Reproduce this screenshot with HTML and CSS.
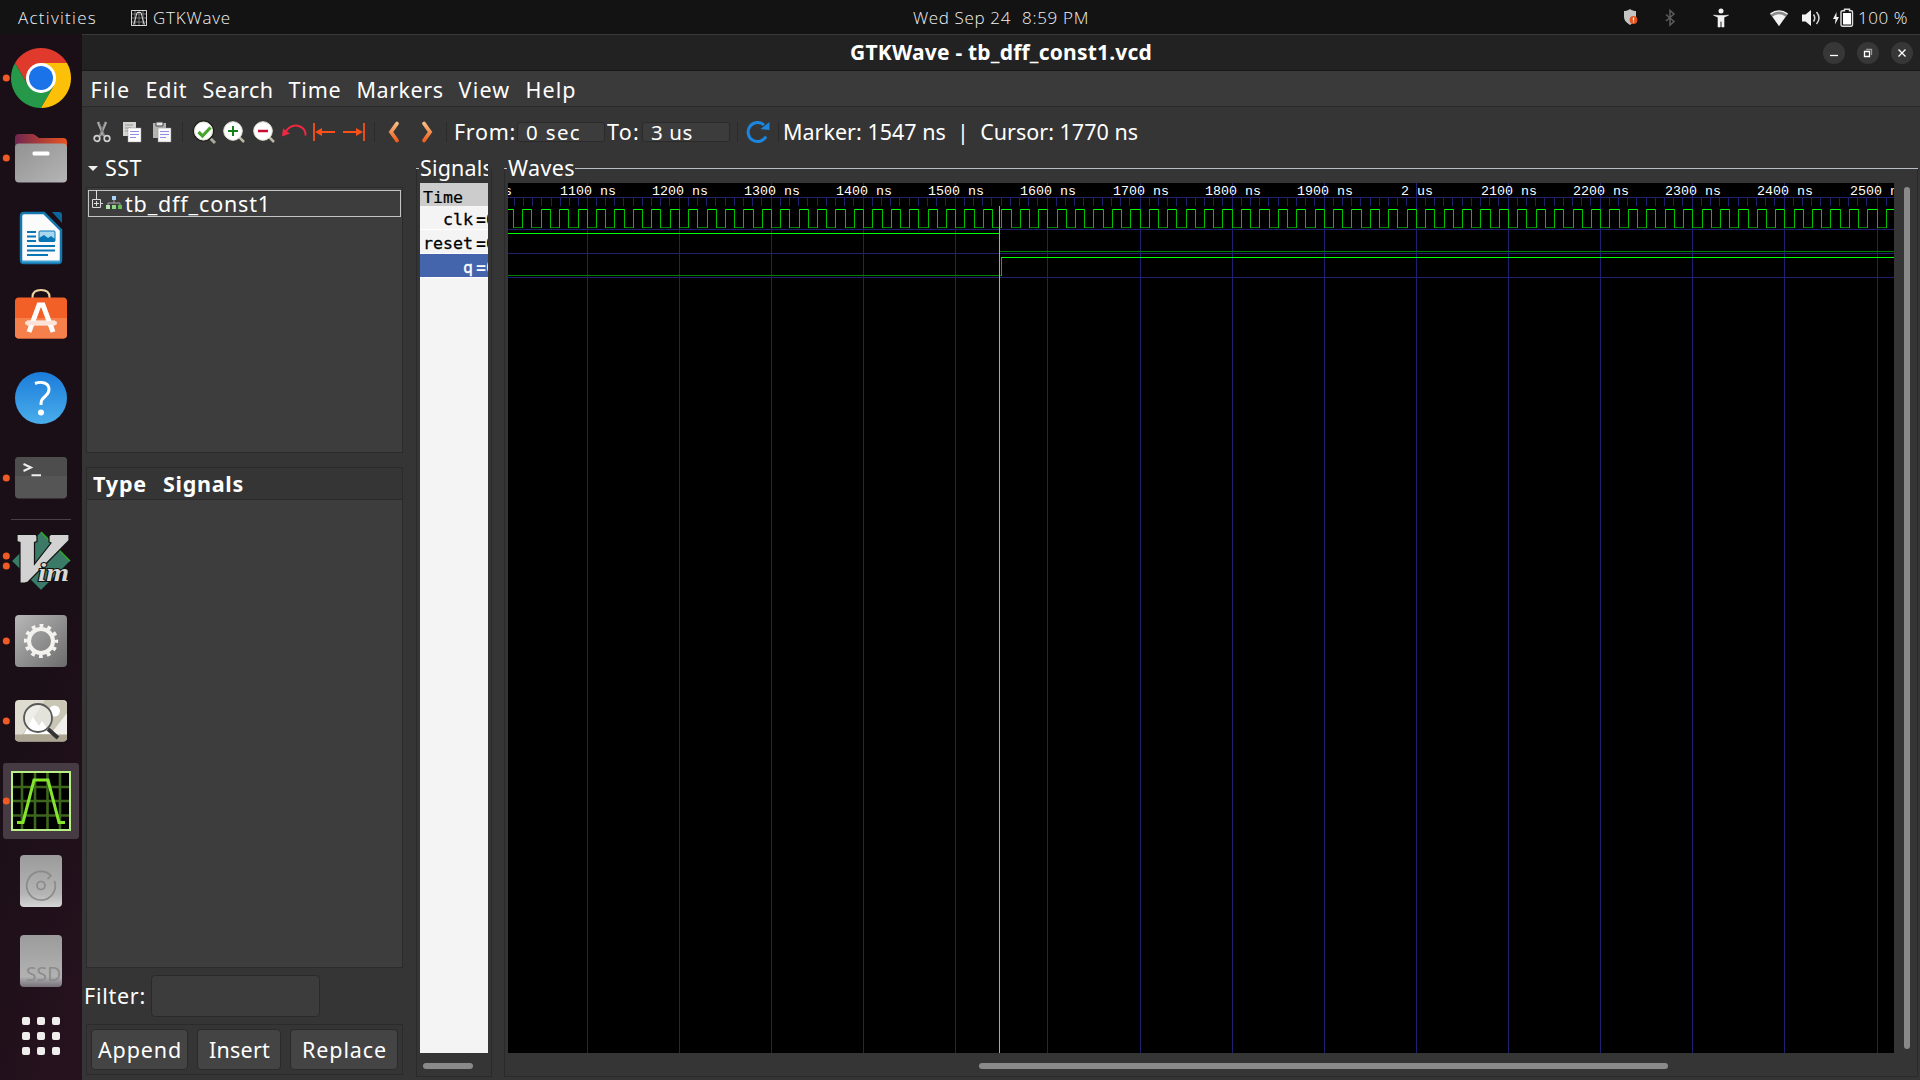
FILE: index.html
```html
<!DOCTYPE html>
<html lang="en">
<head>
<meta charset="utf-8">
<title>GTKWave - tb_dff_const1.vcd</title>
<link rel="stylesheet" href="styles.css">
</head>
<body>
<header class="topbar">
  <span class="fit activities" data-w="79">Activities</span>
  <svg class="app-icon" width="16" height="16" viewBox="0 0 16 16"><path d="M.5.5h15v15H.5zM4 1v14M8 1v14M12 1v14M1 4h14M1 8h14M1 12h14" fill="none" stroke="#777"/><path d="M.5.5h15v15H.5zM2 14h1L6 2.500h4L13 14h1" fill="none" stroke="#d8d8d8"/></svg>
  <span class="fit" data-w="78">GTKWave</span>
  <span class="clock"><span class="fit" data-w="98">Wed Sep 24</span><span class="fit" data-w="67">8:59 PM</span></span>
  <span class="tray">
    <svg class="ti" viewBox="0 0 24 24"><path d="M12 3c-2 1.500-4 2-6 2v6c0 3 2 5.500 6 8 4-2.500 6-5 6-8V5c-2 0-4-.5-6-2z" fill="#c4c4c4"/><circle cx="15.500" cy="14" r="3.900" fill="#e2541f"/><path d="M15.500 11.500v3M15.500 15.500v1" stroke="#fff" stroke-width="1.200"/></svg>
    <svg class="ti bt" viewBox="0 0 24 24"><path d="M8 8.500l8 7-4 3.500V4.500l4 3.500-8 7" fill="none" stroke="#5c5c5c" stroke-width="1.500"/></svg>
    <svg class="ti acc" viewBox="0 0 24 24"><circle cx="12" cy="5" r="2.500" fill="#f2f2f2"/><path d="M4.500 9.200l5 .3h5l5-.3-4.500 2V21h-2.200v-5.500h-1.600V21H9V11.200z" fill="#f2f2f2" stroke="#f2f2f2" stroke-width=".6"/></svg>
    <svg class="ti wifi" viewBox="0 0 24 24"><path d="M3 8Q12 1.500 21 8L12 20z" fill="#8a8a8a"/><path d="M3.500 7.800Q12 2 20.500 7.800" fill="none" stroke="#f2f2f2" stroke-width="1.400"/><path d="M5.500 10.500Q12 6 18.500 10.500L12 20z" fill="#f2f2f2"/></svg>
    <svg class="ti vol" viewBox="0 0 24 24"><path d="M3 8.500h3.500L12 4v16l-5.500-4.500H3z" fill="#f2f2f2"/><path d="M14.500 8.500Q17 12 14.500 15.500M17.500 6Q22.500 12 17.500 18" fill="none" stroke="#d5d5d5" stroke-width="1.500"/></svg>
    <svg class="ti bat" viewBox="0 0 24 24"><path d="M5.500 6L2 13h2.500L4 18.500 8 11H5.500z" fill="#f2f2f2"/><path d="M11.500 4.800h2v-1.500h5v1.500h1.700q1.300 0 1.300 1.300v12.700q0 1.400-1.300 1.400h-8.900q-1.300 0-1.300-1.400V6.100q0-1.300 1.500-1.300z" fill="none" stroke="#dedede" stroke-width="1.400"/><rect x="12" y="7" width="8" height="11.500" fill="#fff"/></svg>
    <span class="fit" data-w="50">100 %</span>
  </span>
</header>
<div class="desktop">
  <nav class="dock">
    <svg class="dk" viewBox="0 0 82 80"><circle class="dot" cx="6.300" cy="40" r="3.500"/><path d="M15 25A30 30 0 0 1 67 25H41L28 47.500z" fill="#e03a2d"/><path d="M15 25A30 30 0 0 0 41 70L54 47.500 41 40 28 47.500z" fill="#26984a"/><path d="M41 70A30 30 0 0 0 67 25H41l-3 15 16 7.500z" fill="#fdc008"/><circle cx="41" cy="40" r="15" fill="#fff"/><circle cx="41" cy="40" r="12" fill="#1a73e8"/></svg>
    <svg class="dk" viewBox="0 0 82 80"><defs><linearGradient id="fo"><stop offset="0" stop-color="#70264f"/><stop offset="1" stop-color="#e95420"/></linearGradient><linearGradient id="fg" x2="1" y2="1"><stop stop-color="#929292"/><stop offset="1" stop-color="#b5b5b5"/></linearGradient></defs><circle class="dot" cx="6.300" cy="40" r="3.500"/><path d="M15 30V20q0-4 4-4h13q2 0 3 1l4 3h24q4 0 4 4v8z" fill="url(#fo)"/><rect x="15" y="25.500" width="52" height="39" rx="4" fill="url(#fg)"/><rect x="32.500" y="33.500" width="17" height="4" rx="1.500" fill="#fff"/></svg>
    <svg class="dk" viewBox="0 0 82 80"><path d="M24 15h20l17 17v30q0 3-3 3H24q-3 0-3-3V18q0-3 3-3z" fill="#fbfbfb" stroke="#1478ae" stroke-width="2.500"/><path d="M22 63.500h38" stroke="#40a3d5" stroke-width="2"/><path d="M52 14h7q3 0 3 3v8z" fill="#0d679f"/><g stroke="#0875b5" stroke-width="2"><path d="M27 34h9M27 38.500h9M27 43h9M27 48h28M27 52.500h28M27 57h21"/></g><rect x="39" y="33" width="16" height="10.500" rx="1" fill="#a8d8ef" stroke="#0875b5"/><path d="M39 43v-3l5-3 4 3 3-2 4 3v2z" fill="#0875b5"/></svg>
    <svg class="dk" viewBox="0 0 82 80"><path d="M32.500 22v-3q0-7 8.500-7t8.500 7v3" fill="none" stroke="#eed4a2" stroke-width="2"/><rect x="15" y="19.500" width="52" height="41" rx="4" fill="#f26027"/><path d="M15 40h52v16.500q0 4-4 4H19q-4 0-4-4z" fill="#f5804c"/><path d="M29 54l10-27h4l10 27M27 45h28" fill="none" stroke="#fff" stroke-width="5"/><path d="M27 45h28" stroke="#ffe3d8" stroke-width="4" stroke-linecap="round"/></svg>
    <svg class="dk" viewBox="0 0 82 80"><defs><linearGradient id="hb" x2="0" y2="1"><stop stop-color="#1b7cda"/><stop offset="1" stop-color="#4aaeeb"/></linearGradient></defs><circle cx="41" cy="40" r="26" fill="url(#hb)"/><path d="M35 25.500Q39 24 42 24.500c9 1 8.500 9.500 3 14-4 3.500-4 5-4 8.500" fill="none" stroke="#fff" stroke-width="3"/><circle cx="41" cy="54.500" r="3" fill="#fff"/></svg>
    <svg class="dk" viewBox="0 0 82 80"><circle class="dot" cx="6.300" cy="40" r="3.500"/><rect x="15" y="19" width="52" height="41.500" rx="4" fill="#555"/><path d="M15 38V23q0-4 4-4h44q4 0 4 4v15z" fill="#4d4d4d"/><path d="M23.500 26l7.500 3.500-7.500 3.500M31.500 37.200h9.500" fill="none" stroke="#eee" stroke-width="2"/></svg>
    <div class="dock-rule"></div>
    <svg class="dk" viewBox="0 0 82 80"><circle class="dot" cx="6.300" cy="35" r="3.500"/><circle class="dot" cx="6.300" cy="45" r="3.500"/><path d="M41 11l29 29-29 29-29-29z" fill="#3b7a66" stroke="#173f31"/><path d="M41 11l29 29" stroke="#2fae20" stroke-width="1.500"/><path d="M17 13.500h19l1 2v5l-2.500 1V43L51 22l-2-1v-6l1.500-1.500H69v6L28 61l-3 1h-5V21.500l-3-1z" fill="#d2d2d2" stroke="#111" stroke-width="1.200"/><text x="38" y="60" textLength="31" lengthAdjust="spacingAndGlyphs" font-family="Liberation Serif,serif" font-weight="bold" font-style="italic" font-size="25" fill="#d8d8d8" stroke="#111" stroke-width="2" paint-order="stroke">im</text></svg>
    <svg class="dk" viewBox="0 0 82 80"><defs><linearGradient id="sg" x2="1" y2="1"><stop stop-color="#b8b8b8"/><stop offset="1" stop-color="#6b6b6b"/></linearGradient></defs><circle class="dot" cx="6.300" cy="40" r="3.500"/><rect x="15" y="14" width="52" height="52" rx="4" fill="url(#sg)"/><circle cx="41" cy="40" r="12" fill="none" stroke="#f4f2ef" stroke-width="4"/><circle cx="41" cy="40" r="15.300" fill="none" stroke="#f4f2ef" stroke-width="3.600" stroke-dasharray="3.800 4.210"  stroke-dashoffset="1.900"/></svg>
    <svg class="dk" viewBox="0 0 82 80"><circle class="dot" cx="6.300" cy="40" r="3.500"/><rect x="15" y="19" width="52" height="41.500" rx="4" fill="#dedbd0"/><path d="M45 19h18l4 4v31H22z" fill="#c9c6b6"/><path d="M50 54l17-22v22z" fill="#f0efea"/><path d="M15 53.500h52v3q0 4-4 4H19q-4 0-4-4z" fill="#aba591"/><circle cx="54.500" cy="30" r="5.500" fill="#fff"/><path d="M24 53l9-17 6 9 3-5 9 13z" fill="#fff"/><circle cx="38" cy="37" r="14" fill="#ffffff80" stroke="#585858" stroke-width="1.800"/><path d="M48 48l10 9" stroke="#333" stroke-width="4"/></svg>
    <svg class="dk" viewBox="0 0 82 80"><rect x="3" y="2" width="76" height="76" rx="3" fill="#463b42"/><circle class="dot" cx="6.300" cy="40" r="3.500"/><rect x="12" y="11" width="58" height="58" fill="#000" stroke="#b9ef85" stroke-width="2"/><path d="M22 12v56M35 12v56M47.500 12v56M60 12v56M13 26h56M13 40h56M13 54.500h56" stroke="#3c661b" stroke-width="2.600"/><path d="M17 61.500h6L34 19h14l11 42.500h6" fill="none" stroke="#85e52d" stroke-width="3"/></svg>
    <svg class="dk" viewBox="0 0 82 80"><defs><linearGradient id="dg" x2="0" y2="1"><stop stop-color="#9b9b9b"/><stop offset=".75" stop-color="#b4b4b4"/><stop offset="1" stop-color="#d6d6d6"/></linearGradient></defs><rect x="20" y="14" width="42" height="52" rx="4" fill="url(#dg)"/><g fill="none" stroke="#8a8a8a" stroke-width="1.700"><path d="M54.500 40A14.300 14.300 0 1 1 51 34.500l-3.500 3.500"/><circle cx="41" cy="44.500" r="4"/></g></svg>
    <svg class="dk" viewBox="0 0 82 80"><defs><linearGradient id="eg" x2="0" y2="1"><stop stop-color="#9b9b9b"/><stop offset=".8" stop-color="#b2b2b2"/><stop offset="1" stop-color="#77707a"/></linearGradient></defs><rect x="20" y="14" width="42" height="52" rx="4" fill="url(#eg)"/><text x="26" y="60" textLength="35" font-family="Noto Sans,sans-serif" font-size="19" fill="#8b8b8b">SSD</text></svg>
    <svg class="dk" viewBox="0 0 82 80"><g fill="#f0eeec"><rect x="22" y="16" width="8" height="8" rx="2"/><rect x="37" y="16" width="8" height="8" rx="2"/><rect x="52" y="16" width="8" height="8" rx="2"/><rect x="22" y="31" width="8" height="8" rx="2"/><rect x="37" y="31" width="8" height="8" rx="2"/><rect x="52" y="31" width="8" height="8" rx="2"/><rect x="22" y="46" width="8" height="8" rx="2"/><rect x="37" y="46" width="8" height="8" rx="2"/><rect x="52" y="46" width="8" height="8" rx="2"/></g></svg>
  </nav>
  <main class="window">
    <div class="titlebar">
      <span class="fit title" data-w="302">GTKWave - tb_dff_const1.vcd</span>
      <span class="controls">
        <svg viewBox="0 0 22 22"><circle cx="11" cy="11" r="11"/><path d="M7 13.500h8"/></svg>
        <svg viewBox="0 0 22 22"><circle cx="11" cy="11" r="11"/><path d="M7.500 9.500h5v5h-5z"/><path d="M9 7.500h5.500V13" class="dim"/></svg>
        <svg viewBox="0 0 22 22"><circle cx="11" cy="11" r="11"/><path d="M7.500 7.500l7 7M14.500 7.500l-7 7"/></svg>
      </span>
    </div>
    <div class="menubar">
      <span class="fit" data-w="40">File</span><span class="fit" data-w="42">Edit</span><span class="fit" data-w="71">Search</span><span class="fit" data-w="53">Time</span><span class="fit" data-w="87">Markers</span><span class="fit" data-w="52">View</span><span class="fit" data-w="51">Help</span>
    </div>
    <div class="toolbar">
      <svg class="tb" viewBox="0 0 30 30"><path d="M11 5l6 14M19 5l-6 14" stroke="#aaa" stroke-width="2.400"/><path d="M12.500 6l5 13M17.500 6l-5 13" stroke="#666" stroke-width=".7"/><circle cx="10" cy="21.500" r="2.800" class="ring"/><circle cx="20" cy="21.500" r="2.800" class="ring"/></svg>
      <svg class="tb" viewBox="0 0 30 30"><path d="M6 5h13v14H6z" fill="#d5d5d1"/><path d="M8 8h8M8 11h6M8 14h4" stroke="#999"/><path d="M11 11h13v14H11z" fill="#fff" stroke="#999" stroke-width=".5"/><path d="M13 14.500h9M13 17.500h9M13 20.500h6" stroke="#8f8fe6"/></svg>
      <svg class="tb" viewBox="0 0 30 30"><path d="M6 6h13v15H6z" fill="#b5b5b0"/><path d="M9 5h7v4H9z" fill="#e8e8e8" stroke="#444"/><path d="M11 11h13v14H11z" fill="#f8f8f8" stroke="#888" stroke-width=".5"/><path d="M13 14.500h9M13 17.500h9M13 20.500h6" stroke="#8f8fe6"/></svg>
      <i class="sep s12"></i>
      <svg class="tb" viewBox="0 0 30 30"><path d="M21 21l5 5" stroke="#aaa99c" stroke-width="3"/><circle cx="14.500" cy="14" r="10" fill="#fff" stroke="#20201a" stroke-width="1.500"/><circle cx="14.500" cy="14" r="9" fill="#fff" stroke="#dedbce"/><path d="M9.500 15l4 4 8-8.500" fill="none" stroke="#46a52b" stroke-width="3.200"/></svg>
      <svg class="tb" viewBox="0 0 30 30"><path d="M20 20l5 5" stroke="#b9b9a6" stroke-width="2.500"/><circle cx="14" cy="14" r="9.300" fill="#fff" stroke="#e1dfd4"/><path d="M9 14h10M14 9v10" stroke="#168119" stroke-width="2"/></svg>
      <svg class="tb" viewBox="0 0 30 30"><path d="M20 20l5 5" stroke="#b9b9a6" stroke-width="2.500"/><circle cx="14" cy="14" r="9.300" fill="#fff" stroke="#e1dfd4"/><path d="M9 14h10" stroke="#c90c31" stroke-width="2.500"/></svg>
      <svg class="tb" viewBox="0 0 30 30"><path d="M6 15Q13 6 21 9.500 27 12 26.500 18.500" fill="none" stroke="#ef2942" stroke-width="2"/><path d="M3 19.500l1-8 7 5z" fill="#ef2942"/></svg>
      <svg class="tb" viewBox="0 0 30 30"><path d="M5 6v18M8 15h18" stroke="#fa5018" stroke-width="1.800"/><path d="M6 15l7-4v8z" fill="#fa5018"/></svg>
      <svg class="tb" viewBox="0 0 30 30"><path d="M25 6v18M4 15h18" stroke="#fa5018" stroke-width="1.800"/><path d="M24 15l-7-4v8z" fill="#fa5018"/></svg>
      <i class="sep s10"></i>
      <svg class="tb" viewBox="0 0 30 30"><defs><linearGradient id="or" x2="0" y2="1"><stop stop-color="#f8bb83"/><stop offset="1" stop-color="#ef611d"/></linearGradient></defs><path d="M18 6.500L12 15l6 8.500" fill="none" stroke="url(#or)" stroke-width="3.800" stroke-linecap="round"/></svg>
      <svg class="tb" viewBox="0 0 30 30"><path d="M15 6.500l6 8.500-6 8.500" fill="none" stroke="url(#or)" stroke-width="3.800" stroke-linecap="round"/></svg>
      <i class="sep s14"></i>
      <span class="slot w63"><span class="fit" data-w="62">From:</span></span>
      <span class="entry"><span class="fit" data-w="55">0 sec</span></span>
      <span class="slot w33"><span class="fit" data-w="33">To:</span></span>
      <span class="entry"><span class="fit" data-w="42">3 us</span></span>
      <i class="sep s15"></i>
      <svg class="tb" viewBox="0 0 30 30"><path d="M23 19.500A9.500 9.500 0 1 1 21 8" fill="none" stroke="#1d85dd" stroke-width="3"/><path d="M17.500 12l9-7v8z" fill="#1d85dd"/></svg>
      <i class="sep s10"></i>
      <span class="fit" data-w="355">Marker: 1547 ns&nbsp; |&nbsp; Cursor: 1770 ns</span>
    </div>
    <div class="panes">
      <section class="left">
        <div class="sst"><i class="tri"></i><span class="fit" data-w="37">SST</span></div>
        <div class="tree">
          <div class="tree-row">
            <svg width="36" height="27" viewBox="0 0 36 27"><path d="M7.500 0v9M12 13.500h2M3.500 9.500h8v8h-8zM5 13.500h5M7.500 11v5" fill="none" stroke="#ddd"/><path d="M25 9v4M19 16v-3h12v3" fill="none" stroke="#aaa"/><path d="M23 6h4v4h-4z" fill="#a8d2fa"/><path d="M17 15h4v4h-4z" fill="#b4e5ae"/><path d="M23 15h4v4h-4z" fill="#8ed688"/><path d="M29 15h4v4h-4z" fill="#5fbd58"/></svg>
            <span class="fit" data-w="146">tb_dff_const1</span>
          </div>
        </div>
        <div class="list">
          <div class="list-head"><b class="fit" data-w="54">Type</b><b class="fit" data-w="81">Signals</b></div>
        </div>
        <div class="filter"><span class="slot w67"><span class="fit" data-w="62">Filter:</span></span><span class="filter-box"></span></div>
        <div class="buttons">
          <span class="btn b1"><span class="fit" data-w="84">Append</span></span>
          <span class="btn b2"><span class="fit" data-w="61">Insert</span></span>
          <span class="btn b3"><span class="fit" data-w="85">Replace</span></span>
        </div>
      </section>
      <section class="frame signals">
        <div class="legend"><span class="fit" data-w="73">Signals</span></div>
        <div class="siglist">
          <div class="sig head">Time</div>
          <div class="sig"><span>clk</span>=0</div>
          <div class="sig"><span>reset</span>=0</div>
          <div class="sig sel"><span>q</span>=0</div>
        </div>
        <div class="hbar"></div>
      </section>
      <section class="frame waves">
        <div class="legend"><span class="fit" data-w="67">Waves</span><i></i></div>
        <div class="wave-row"><svg id="wave" width="1386" height="870" viewBox="508 183 1386 870" shape-rendering="crispEdges"></svg><div class="vbar"></div></div>
        <div class="hbar"></div>
      </section>
    </div>
  </main>
</div>
<script src="app.js"></script>
</body>
</html>
```
FILE: styles.css
```css
* { box-sizing: border-box; }
body { margin: 0; width: 1920px; height: 1080px; overflow: hidden; display: flex; flex-direction: column; background: #1b0f17; color: #fff; font-family: "Noto Sans", sans-serif; font-size: 21.5px; line-height: 28px; white-space: nowrap; }
svg { display: block; flex: none; }
.fit { display: inline-block; flex: none; }
.topbar { height: 34px; flex: none; background: #131313; display: flex; align-items: center; padding: 2px 12px 0 18px; font-family: "Open Sans", "Noto Sans", sans-serif; font-weight: 300; font-size: 17px; line-height: 30px; color: #f2f2f2; }
.app-icon { margin: 0 6px 0 34px; }
.clock { margin-left: 682px; display: flex; gap: 11px; }
.tray { margin-left: auto; display: flex; align-items: center; }
.ti { width: 24px; height: 24px; }
.bt { margin-left: 16px; }
.acc { margin-left: 27px; }
.wifi { margin-left: 34px; }
.vol { margin-left: 8px; }
.bat { margin: 0 3px 0 8px; }
.desktop { flex: 1; display: flex; min-height: 0; }
.dock { width: 82px; flex: none; padding-top: 4px; background: linear-gradient(110deg, #1b0f17 60%, #27121f); }
.dk { width: 82px; height: 80px; }
.dot { fill: #f05a24; }
.dock-rule { height: 3px; margin: 0 11px; border: solid transparent; border-width: 1px 0; background: #484046; background-clip: padding-box; }
.window { flex: 1; min-width: 0; display: flex; flex-direction: column; background: #353535; }
.titlebar { height: 37px; flex: none; background: #222; border-top: 1px solid #383838; border-bottom: 1px solid #181818; display: flex; align-items: center; padding-left: 768px; }
.title { font-weight: 700; font-size: 21px; padding-bottom: 2px; }
.controls { margin-left: auto; margin-right: 7px; display: flex; gap: 12px; }
.controls svg { width: 22px; height: 22px; fill: #373737; stroke: #fff; stroke-width: 1.3; }
.controls circle { stroke: none; }
.controls path { fill: none; }
.controls .dim { stroke: #999; }
.menubar { height: 36px; flex: none; background: #3a3a3a; border-bottom: 1px solid #2a2a2a; display: flex; align-items: center; gap: 15px; padding: 3px 0 0 8.5px; }
.toolbar { height: 50px; flex: none; display: flex; align-items: center; padding-left: 5px; }
.tb { width: 30px; height: 30px; }
.ring { fill: none; stroke: #d0d0d0; stroke-width: 1.7; }
.sep { height: 20px; flex: none; border-left: 1px solid #2a2a2a; margin-left: 5px; }
.s12 { width: 7px; }
.s10 { width: 5px; }
.s14.sep { width: 8px; margin-left: 7px; }
.s15.sep { width: 6px; margin-left: 7px; }
.slot { flex: none; display: block; }
.w63 { width: 63px; }
.w33 { width: 37px; padding-left: 2px; }
.w67 { width: 67px; }
.entry { width: 88px; height: 20px; flex: none; display: flex; align-items: center; padding-left: 8px; border: 1px solid #2a2a2a; border-radius: 3px; background: #3c3c3c; }
.entry .fit { font-size: 20.500px; }
.panes { flex: 1; display: flex; min-height: 0; }
.left { width: 334px; flex: none; }
.sst { height: 30px; display: flex; align-items: center; padding: 0 0 8px 6px; line-height: 22px; }
.tri { border: 5px solid transparent; border-top-color: #eee; border-bottom: 0; margin-right: 7px; }
.tree { height: 266px; width: 317px; margin-left: 4px; border: 1px solid #2b2b2b; background: #3d3d3d; padding: 2px 1px; }
.tree-row { height: 27px; border: 1px solid #c4c4c4; display: flex; align-items: center; padding-left: 0; }
.list { height: 501px; width: 317px; margin: 14px 0 0 4px; border: 1px solid #2b2b2b; background: #3d3d3d; }
.list-head { height: 32px; background: #353535; border-bottom: 1px solid #2b2b2b; display: flex; align-items: center; gap: 16px; padding-left: 6px; }
.filter { height: 42px; margin-top: 7px; padding-left: 2px; display: flex; align-items: center; }
.filter-box { width: 169px; height: 42px; border: 1px solid #2a2a2a; border-radius: 4px; background: #3c3c3c; }
.buttons { width: 317px; height: 51px; margin: 7px 0 0 4px; border: 1px solid #2b2b2b; display: flex; gap: 9px; padding: 4px 4px 0; }
.btn { height: 41px; display: flex; align-items: center; justify-content: center; border: 1px solid #2a2a2a; border-radius: 4px; background: #444; padding-left: 1px; }
.b1 { width: 97px; }
.b2 { width: 84px; }
.b3 { width: 108px; }
.frame { height: 920px; border-bottom: 1px solid #2a2a2a; background: linear-gradient(#2a2a2a, #2a2a2a) 0 12px / 1px 100% no-repeat, linear-gradient(#2a2a2a, #2a2a2a) 100% 12px / 1px 100% no-repeat; flex: none; }
.legend { height: 26px; overflow: hidden; display: flex; line-height: 21px; }
.legend::before { content: ""; width: 3px; height: 1px; margin: 11px 1px 0 0; background: #b8bec4; flex: none; }
.legend i { flex: 1; height: 1px; background: #b8bec4; margin-top: 11px; }
.signals { width: 76px; }
.signals .legend { width: 72px; }
.siglist { width: 68px; height: 870px; margin-left: 4px; background: #f4f4f4; overflow: hidden; color: #000; font-family: "DejaVu Sans Mono", monospace; font-size: 16.6px; }
.sig { height: 24px; border-bottom: 1px solid #fff; line-height: 27px; display: flex; font-weight: 700; }
.sig span { width: 56px; text-align: right; padding-right: 3px; flex: none; font-weight: 400; -webkit-text-stroke: .3px currentColor; }
.sig.head { background: #ccc; padding-left: 3px; font-weight: 400; line-height: 29px; height: 23px; border-bottom: 0; -webkit-text-stroke: .2px #000; }
.sel { background: #4464ac; color: #fff; }
.hbar { height: 6px; border-radius: 3px; background: #8a8a8a; width: 50px; margin: 10px 0 0 7px; }
.waves { width: 1414px; margin-left: 12px; }
.waves .hbar { width: 689px; margin-left: 475px; }
.wave-row { display: flex; padding-left: 4px; }
.vbar { width: 6px; height: 862px; margin: 4px 0 0 10px; border-radius: 3px; background: #8a8a8a; }
#wave { background: #000; }
#wave text { font-family: "Liberation Mono", monospace; font-size: 13.3px; fill: #fff; }
```
FILE: app.js
```js
document.querySelectorAll('.fit').forEach(function (el) {
  var natural = el.getBoundingClientRect().width;
  var gap = (Number(el.dataset.w) - natural) / el.textContent.length;
  el.style.letterSpacing = gap.toFixed(3) + 'px';
});

var svg = document.getElementById('wave');
var out = '';
var X0 = 508, X1 = 1894, Y0 = 183, Y1 = 1053;
var NS100 = 92.13, ORIGIN = 587.24;

function rect(x, y, w, h, fill) {
  out += '<rect x="' + x + '" y="' + y + '" width="' + w + '" height="' + h + '" fill="' + fill + '"/>';
}

// time grid
for (var k = -1; k <= 14; k++) {
  var gx = Math.floor(ORIGIN + NS100 * k);
  rect(gx, Y0, 1, Y1 - Y0, '#202070');
  var base = k < 0 ? gx + 0.9 : gx - 0.06;
  for (var t = 1; t < 10; t++) rect(Math.floor(base + t * NS100 / 10), 197, 1, 9, '#202070');
}
[197, 229, 253, 277].forEach(function (y) { rect(X0, y, X1 - X0, 1, '#202070'); });

// time labels
for (k = -1; k <= 14; k++) {
  var ns = 1100 + k * 100;
  var label = ns % 1000 ? ns + ' ns' : ns / 1000 + ' us';
  var lx = Math.floor(ORIGIN + NS100 * k) - 4 * label.length + 1;
  out += '<text x="' + lx + '" y="195">' + label + '</text>';
}

// clk toggles every 10 ns
for (k = -9; k <= 142; k++) {
  var a = Math.floor(ORIGIN + NS100 / 10 * k), b = Math.floor(ORIGIN + NS100 / 10 * (k + 1));
  var high = Math.abs(k % 2) === 1;
  rect(a, high ? 209 : 227, b - a + 1, 1, high ? '#00ff00' : '#008000');
  rect(a, 209, 1, 19, '#00c000');
}

// reset falls at the marker, q rises on the next clock edge
rect(X0, 233, 999 - X0, 1, '#00ff00');
rect(999, 251, X1 - 999, 1, '#008000');
rect(X0, 275, 1001 - X0, 1, '#008000');
rect(1001, 257, 1, 19, '#00c000');
rect(1001, 257, X1 - 1001, 1, '#00ff00');

// marker
rect(999, 206, 1, Y1 - 206, '#ff8080');
svg.innerHTML = out;
```
